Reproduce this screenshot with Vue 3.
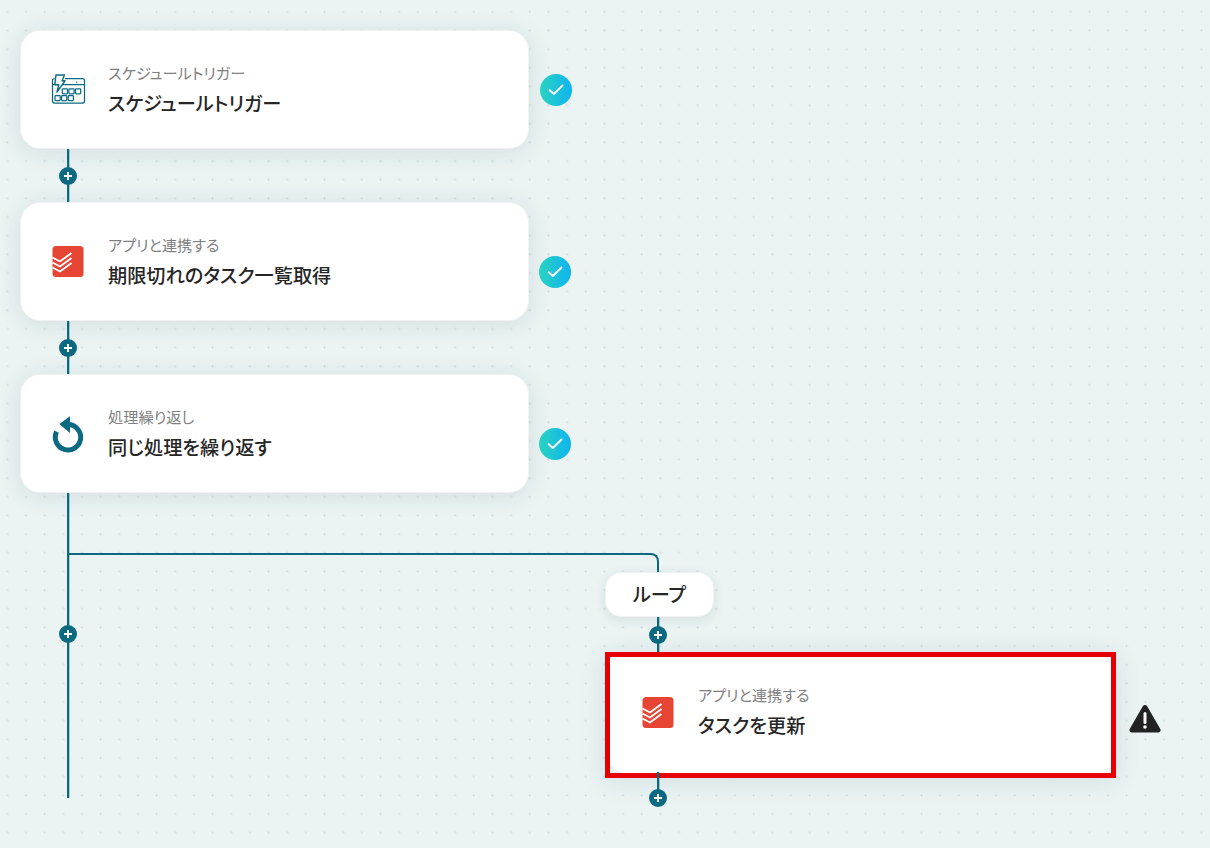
<script setup>
const cards = [
  { sub: 'スケジュールトリガー', title: 'スケジュールトリガー', icon: 'calendar' },
  { sub: 'アプリと連携する', title: '期限切れのタスク一覧取得', icon: 'todoist' },
  { sub: '処理繰り返し', title: '同じ処理を繰り返す', icon: 'loop' },
]
</script>

<template>
  <div class="canvas">
    <div class="trunk">
      <template v-for="(c, i) in cards" :key="i">
        <div class="row">
          <div class="card">
            <div class="icon">
              <svg v-if="c.icon === 'calendar'" width="36" height="36" viewBox="0 0 36 36" fill="none" stroke="#0b6a82" stroke-width="1.250" stroke-linejoin="round">
                <path d="M15 6.500H32.500a2 2 0 0 1 2 2V29a2 2 0 0 1-2 2H4.500a2 2 0 0 1-2-2V8.500a2 2 0 0 1 2-2" />
                <path d="M2.500 12.500H6.500M11.500 12.500H34.500" />
                <path d="M6 3H14.500L12 8.800H15L7 20L8.700 12.800H4.800Z" fill="#fff" stroke-width="1.400" />
                <path d="M26.300 10.200h1" stroke-width="1.500" />
                <rect x="12.300" y="16.800" width="5.200" height="5" rx=".8" />
                <rect x="18.900" y="16.800" width="5.200" height="5" rx=".8" />
                <rect x="25.500" y="16.800" width="5.200" height="5" rx=".8" />
                <rect x="5" y="23.500" width="5.200" height="5" rx=".8" />
                <rect x="11.600" y="23.500" width="5.200" height="5" rx=".8" />
                <rect x="18.200" y="23.500" width="5.200" height="5" rx=".8" />
              </svg>
              <svg v-else-if="c.icon === 'todoist'" width="36" height="36" viewBox="0 0 36 36">
                <rect x="2.500" y="2" width="31" height="31" rx="3.500" fill="#e64533" />
                <path d="M2.500 13.500L10 17.500L21.500 9M2.500 18.500L10 22.500L21.500 14M2.500 23.500L10 27.500L21.500 19" fill="none" stroke="#fff" stroke-width="1.900" />
              </svg>
              <svg v-else width="36" height="36" viewBox="0 0 36 36">
                <path d="M18 8.600A12.700 12.700 0 1 1 6.600 15.700" fill="none" stroke="#0b6a82" stroke-width="5" />
                <path d="M9.300 8L20 .2V17Z" fill="#0b6a82" />
              </svg>
            </div>
            <div class="texts">
              <div class="sub">{{ c.sub }}</div>
              <div class="title">{{ c.title }}</div>
            </div>
          </div>
          <div class="check" :class="{ first: i === 0 }">
            <svg width="16" height="12" viewBox="0 0 16 12" fill="none" stroke="#fff" stroke-width="1.800" stroke-linecap="round" stroke-linejoin="round"><path d="M1.500 6L5.800 10L14.500 1.500" /></svg>
          </div>
        </div>
        <div v-if="i < 2" class="connector short">
          <span class="plus"></span>
        </div>
      </template>
      <div class="connector long">
        <span class="plus trunk-plus"></span>
      </div>
    </div>

    <div class="branch-line"></div>

    <div class="branch">
      <div class="pill">ループ</div>
      <div class="connector pill-gap"><span class="plus"></span></div>
      <div class="selected-wrap">
        <div class="card inner">
          <div class="icon">
            <svg width="36" height="36" viewBox="0 0 36 36">
              <rect x="2.500" y="2" width="31" height="31" rx="3.500" fill="#e64533" />
              <path d="M2.500 13.500L10 17.500L21.500 9M2.500 18.500L10 22.500L21.500 14M2.500 23.500L10 27.500L21.500 19" fill="none" stroke="#fff" stroke-width="1.900" />
            </svg>
          </div>
          <div class="texts">
            <div class="sub">アプリと連携する</div>
            <div class="title">タスクを更新</div>
          </div>
        </div>
        <svg class="warn" width="32" height="30" viewBox="0 0 32 30">
          <path d="M16 3.500L29 26H3Z" fill="#222" stroke="#222" stroke-width="5" stroke-linejoin="round" />
          <path d="M16 9.500V18.500" stroke="#fff" stroke-width="3" stroke-linecap="round" />
          <circle cx="16" cy="23" r="1.800" fill="#fff" />
        </svg>
      </div>
      <div class="connector end"><span class="plus"></span></div>
    </div>
  </div>
</template>

<style>
html, body { margin: 0; background: #ebf3f3; }
</style>

<style scoped>
.canvas {
  position: relative;
  width: 1210px;
  height: 848px;
  overflow: hidden;
  box-sizing: border-box;
  padding: 30px 0 0 20px;
  background-color: #ebf3f3;
  background-image: radial-gradient(circle, #d8e1e1 1px, transparent 1.4px);
  background-size: 18.67px 18.67px;
  background-position: -2px 2.5px;
  font-family: "Noto Sans CJK JP", "Noto Sans", sans-serif;
  font-feature-settings: "palt";
}
.trunk {
  display: flex;
  flex-direction: column;
  width: 560px;
}
.row {
  display: flex;
  align-items: center;
  height: 119px;
}
.card {
  box-sizing: border-box;
  flex: none;
  width: 509px;
  height: 119px;
  display: flex;
  align-items: center;
  gap: 22px;
  padding-left: 29px;
  background: #fff;
  border: 1px solid #f0f3f3;
  border-radius: 20px;
  box-shadow: 0 3px 24px rgba(30, 70, 80, 0.11);
}
.icon {
  width: 36px;
  height: 36px;
  flex: none;
}
.icon svg { display: block; overflow: visible; }
.texts {
  display: flex;
  flex-direction: column;
  gap: 8px;
  margin-top: -1px;
}
.inner .texts { margin-top: -5px; }
.sub {
  font-size: 15.2px;
  line-height: 20px;
  color: #808080;
}
.title {
  font-size: 19.2px;
  line-height: 26px;
  font-weight: 500;
  color: #262626;
}
.check {
  width: 32px;
  height: 32px;
  margin-left: 10px;
  margin-top: 20px;
  border-radius: 50%;
  background: linear-gradient(90deg, #2ad3c0, #0fb4f0);
  display: flex;
  align-items: center;
  justify-content: center;
}
.check.first { margin-left: 11px; margin-top: 0; }
.connector {
  position: relative;
  width: 2px;
  background: #0b6a82;
  box-shadow: 1px 0 0 rgba(11, 106, 130, 0.3);
}
.trunk .connector { margin-left: 47px; }
.short { height: 53px; }
.long { height: 305px; }
.plus {
  position: absolute;
  left: 50%;
  top: 50%;
  width: 18px;
  height: 18px;
  transform: translate(-50%, -50%);
  border-radius: 50%;
  background-color: #0b6a82;
  background-image: linear-gradient(#fff, #fff), linear-gradient(#fff, #fff);
  background-size: 8px 2px, 2px 8px;
  background-position: center;
  background-repeat: no-repeat;
}
.trunk-plus { top: 141px; }
.branch-line {
  position: absolute;
  left: 68px;
  top: 553px;
  width: 589px;
  height: 20px;
  border-top: 2px solid #0b6a82;
  border-right: 2px solid #0b6a82;
  border-top-right-radius: 8px;
}
.branch {
  position: absolute;
  left: 605px;
  top: 572px;
  width: 511px;
  display: flex;
  flex-direction: column;
  align-items: flex-start;
}
.pill {
  box-sizing: border-box;
  width: 109px;
  height: 45px;
  padding-bottom: 2px;
  display: flex;
  align-items: center;
  justify-content: center;
  background: #fff;
  border: 1px solid #f0f3f3;
  border-radius: 16px;
  box-shadow: 0 3px 12px rgba(30, 70, 80, 0.1);
  font-size: 19.2px;
  font-weight: 500;
  color: #262626;
}
.pill-gap {
  height: 36px;
  margin-left: 52px;
}
.selected-wrap {
  position: relative;
  box-sizing: border-box;
  width: 511px;
  height: 126px;
  margin-top: -1px;
  border: 5px solid #e60000;
  box-shadow: 0 3px 24px rgba(30, 70, 80, 0.11);
}
.card.inner {
  width: 501px;
  height: 116px;
  border: 0;
  box-shadow: none;
  border-radius: 0 0 0 16px;
  padding-left: 30px;
  padding-bottom: 4px;
  background: #fff;
}
.warn {
  position: absolute;
  left: 519px;
  top: 47px;
}
.end {
  height: 27px;
  margin-left: 52px;
  margin-top: -6px;
  z-index: 1;
}
.end .plus { top: 26px; }
</style>
